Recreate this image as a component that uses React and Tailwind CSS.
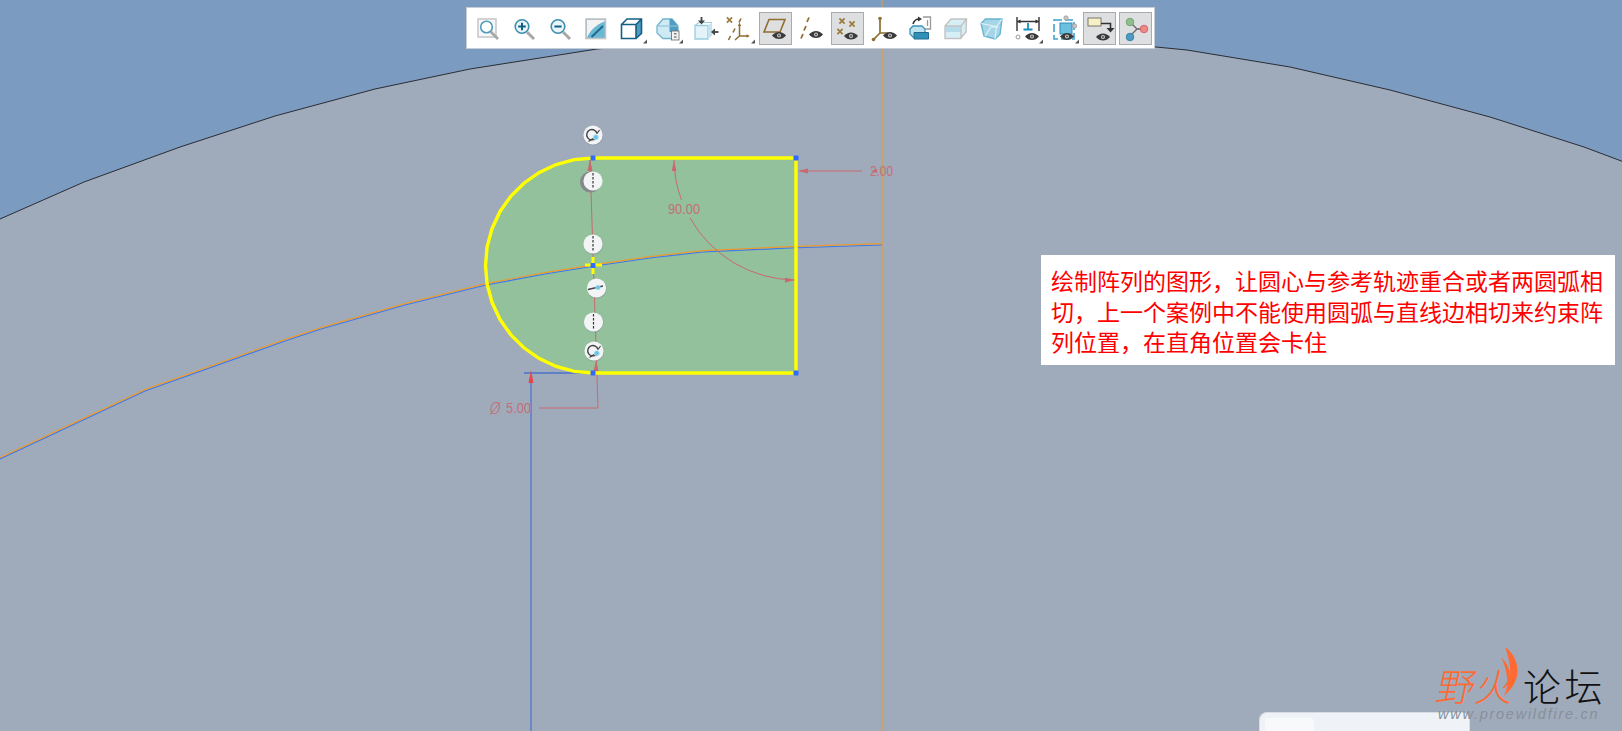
import React from "react";

const bigPts = [[-20, 228], [0, 219], [84, 182], [180, 147], [275, 116], [375, 89], [470, 69], [597, 49], [730, 37], [880, 32], [1030, 36], [1156, 47], [1187, 50], [1290, 67], [1390, 90], [1490, 117], [1584, 147], [1640, 168]];
const bigLine = bigPts.map((p) => p.join(",")).join(" ");
const bigPoly = bigLine + " 1640,760 -20,760";

function sketchArc() {
  const pts = [];
  const n = 18;
  for (let i = 0; i <= n; i++) {
    const a = -Math.PI / 2 - (Math.PI * i) / n;
    pts.push(`${(593 + 107.5 * Math.cos(a)).toFixed(1)},${(265.5 + 107.5 * Math.sin(a)).toFixed(1)}`);
  }
  return pts;
}
const arcPts = sketchArc();
const sketchOutline = `796,373 796,158 ${arcPts.join(" ")}`;

const traj = [[0, 458], [145, 390], [285, 340], [321, 328], [405, 304], [486, 284], [545, 273], [595, 265], [650, 257], [703, 251], [790, 247], [882, 244]];
const trajO = traj.map((p) => `${p[0]},${p[1] - 0.4}`).join(" ");
const trajB = traj.map((p) => `${p[0]},${p[1] + 1}`).join(" ");

const DIM = "#c9696d";

function Dashes({ x, y }) {
  return <line x1={x} y1={y - 8} x2={x} y2={y + 8} stroke="#333" strokeWidth="1.2" strokeDasharray="2.4 1.6" />;
}
function Disc({ x, y }) {
  return (
    <g>
      <circle cx={x + 0.3} cy={y + 0.8} r="9.8" fill="#8a8f96" opacity="0.55" />
      <circle cx={x} cy={y} r="9.6" fill="#f3f4f6" />
    </g>
  );
}
function TangentHandle({ x, y }) {
  return (
    <g>
      <Disc x={x} y={y} />
      <path d={`M${x + 2.5} ${y + 3.5}A5.2 5.2 0 1 1 ${x + 4} ${y - 1.5}`} fill="none" stroke="#444" strokeWidth="1.4" />
      <path d={`M${x - 4.5} ${y + 6.5}L${x} ${y + 3.5}M${x + 4} ${y - 1.5}L${x + 6.5} ${y - 5}`} stroke="#444" strokeWidth="1.2" fill="none" />
      <circle cx={x + 2.8} cy={y + 2.2} r="2.5" fill="#6cc6e6" stroke="#a9dff0" strokeWidth="0.6" />
    </g>
  );
}

function Eye({ x = 22, y = 24 }) {
  return (
    <g>
      <path d={`M${x - 7} ${y}C${x - 3.2} ${y - 4.8} ${x + 3.2} ${y - 4.8} ${x + 7} ${y}C${x + 3.2} ${y + 4.8} ${x - 3.2} ${y + 4.8} ${x - 7} ${y}Z`} fill="#3a3a3a" />
      <circle cx={x} cy={y} r="2" fill="#cfcfcf" />
      <circle cx={x} cy={y} r="0.9" fill="#3a3a3a" />
    </g>
  );
}
function Corner() {
  return <path d="M32 27.5v4h-4z" fill="#555" />;
}
function XMark({ x, y, s = 2.6, c = "#9c7a3c" }) {
  return <path d={`M${x - s} ${y - s}L${x + s} ${y + s}M${x + s} ${y - s}L${x - s} ${y + s}`} stroke={c} strokeWidth="1.7" />;
}
const BR = "#8f6e33";

const icons = [
  <g key="a">
    <rect x="7" y="7" width="18" height="18" fill="#f7f8f9" stroke="#c9c9c9" strokeWidth="1.6" />
    <circle cx="15.5" cy="15" r="5.8" fill="#fff" stroke="#4b9dbd" strokeWidth="1.6" />
    <path d="M19.5 19.5L27 27" stroke="#a8a8a8" strokeWidth="2.8" />
  </g>,
  <g key="b">
    <circle cx="15" cy="14.5" r="6.8" fill="#eaf5f9" stroke="#3d8fae" strokeWidth="1.6" />
    <path d="M11.2 14.5h7.6M15 10.7v7.6" stroke="#0f5f85" strokeWidth="2" />
    <path d="M20 20L27 27" stroke="#a8a8a8" strokeWidth="3" />
  </g>,
  <g key="c">
    <circle cx="15" cy="14.5" r="6.8" fill="#eaf5f9" stroke="#3d8fae" strokeWidth="1.6" />
    <path d="M11.4 14.5h7.2" stroke="#0f5f85" strokeWidth="2" />
    <path d="M20 20L27 27" stroke="#a8a8a8" strokeWidth="3" />
  </g>,
  <g key="d">
    <rect x="7" y="7" width="19.5" height="19.5" fill="#6bb8d4" stroke="#c4c4c4" strokeWidth="1.6" />
    <path d="M8 8h17.5v1.5C21 11 13 15 8 25.5z" fill="#f3f3f3" />
    <path d="M12.5 25L24 14" stroke="#1d6c90" strokeWidth="2" />
  </g>,
  <g key="e">
    <path d="M6.5 12.5h14.5v14H6.5z" fill="#fff" />
    <path d="M21 12.5L26.5 7v14.5L21 26.5z" fill="#4e9dbf" />
    <path d="M6.5 12.5h14.5v14H6.5zM6.5 12.5L12 7h14.5v14.5L21 26.5M21 12.5L26.5 7" fill="none" stroke="#155f84" strokeWidth="1.6" />
    <Corner />
  </g>,
  <g key="f">
    <path d="M6 14L12 7h9l6 7v7l-5 5.5H12L6 21z" fill="#cfeaf4" stroke="#72b5d0" strokeWidth="1.3" />
    <path d="M18.5 7h2.5l6 7v6h-8.5z" fill="#4f9dc0" />
    <path d="M6 14h21" stroke="#8cc4da" strokeWidth="1.1" />
    <rect x="20.5" y="19" width="7.5" height="9" fill="#f3f3f3" stroke="#666" strokeWidth="0.8" />
    <path d="M23 21.8h2.5M23 25h2.5" stroke="#444" strokeWidth="1" />
    <Corner />
  </g>,
  <g key="g">
    <path d="M8 13.5h13v13.5H8z" fill="#e3f3f9" stroke="#9ccde0" strokeWidth="1.3" />
    <path d="M21 13.5l4-3v13l-4 3.5z" fill="#c2e3ef" />
    <path d="M8 13.5l4-3h13" fill="none" stroke="#9ccde0" strokeWidth="1.1" />
    <path d="M14.5 5v6" stroke="#444" strokeWidth="1.8" />
    <path d="M11 8.5h7l-3.5 4z" fill="#444" />
    <path d="M31.5 20h-6" stroke="#444" strokeWidth="1.8" />
    <path d="M28 16.5v7l-4-3.5z" fill="#444" />
  </g>,
  <g key="h">
    <XMark x={6.5} y={8} />
    <path d="M16 10.5l2-4M5.5 28l2-4M10 20.5l2-4" stroke={BR} strokeWidth="1.6" />
    <path d="M16.5 24v-11M16.5 24h8M12 28l4.5-4" stroke={BR} strokeWidth="1.5" fill="none" />
    <path d="M14.8 14l1.7-3.4 1.7 3.4zM23.5 22.3l3.4 1.7-3.4 1.7z" fill={BR} />
    <Corner />
  </g>,
  <g key="i">
    <path d="M10 7.5h16l-5 12.5H5z" fill="#dedfdf" stroke={BR} strokeWidth="1.6" />
    <Eye x={20} y={23.5} />
  </g>,
  <g key="j">
    <path d="M14 5.5l-2 4.5M11 14l-2 4.5M8 22l-2 4.5" stroke={BR} strokeWidth="1.8" />
    <Eye x={21} y={22.5} />
  </g>,
  <g key="k">
    <XMark x={11} y={9} />
    <XMark x={21} y={12} />
    <XMark x={9} y={19.5} />
    <Eye x={20} y={24} />
  </g>,
  <g key="l">
    <path d="M13 21V7M13 21h8M13 21l-6.5 6.5" stroke={BR} strokeWidth="1.7" fill="none" />
    <circle cx="13" cy="6.5" r="1.8" fill={BR} />
    <circle cx="6.5" cy="27.5" r="1.8" fill={BR} />
    <Eye x={23} y={23.5} />
  </g>,
  <g key="m">
    <path d="M7 17l3-3h9l3 3v8H10l-3-3z" fill="#bfe3ef" stroke="#3f93b7" strokeWidth="1.3" />
    <path d="M11 20.5h14.5v6.5H11z" fill="#2f8fb7" stroke="#1d6c90" strokeWidth="1" />
    <path d="M10 12c1-3 3-5 6-5" stroke="#333" strokeWidth="1.6" fill="none" />
    <path d="M15 4.5l4 2.5-4 2.5z" fill="#333" />
    <path d="M20 5h7.5v12H22M24.5 8v6" stroke="#999" strokeWidth="1.3" fill="none" />
  </g>,
  <g key="n">
    <path d="M6 14L12 7h15.5l-.5 13-5.5 6.5H6z" fill="#d7eef6" stroke="#c2c2c2" strokeWidth="1.4" />
    <path d="M6.5 14.5H21.5v5.5H6.5z" fill="#b4dbe9" />
    <path d="M6 14h16l5.5-7M22 14v12.5" fill="none" stroke="#c2c2c2" strokeWidth="1.3" />
  </g>,
  <g key="o">
    <path d="M6 11.5L10.5 7H27l-2 15.5-5 4.5-11-3z" fill="#a5d6e8" stroke="#67b4d1" strokeWidth="1.4" />
    <path d="M6 11.5l15.5 3L27 7M21.5 14.5L20 27M10 24l6-9 7.5 0" fill="none" stroke="#e3f3f9" strokeWidth="1.1" />
  </g>,
  <g key="p">
    <path d="M6 5v14M28 5v14M6 9.5h22" stroke="#333" strokeWidth="1.4" fill="none" />
    <path d="M6 9.5l3.5-2v4zM28 9.5l-3.5-2v4z" fill="#333" />
    <path d="M17 11v6.5M12.5 17.5h9" stroke="#1d8ec0" strokeWidth="1.8" />
    <circle cx="7" cy="25" r="2" fill="#fff" stroke="#999" />
    <Eye x={21} y={24.5} />
    <Corner />
  </g>,
  <g key="q">
    <rect x="7" y="8" width="20" height="19" fill="#fff" stroke="#3fa3cd" strokeWidth="1.6" strokeDasharray="8 3" />
    <rect x="13" y="11" width="12" height="11" fill="#6bbfe0" stroke="#2f8fb7" />
    <circle cx="19" cy="6" r="2.2" fill="#c6c6c6" stroke="#888" strokeWidth="0.6" />
    <circle cx="27.5" cy="14" r="2.2" fill="#c6c6c6" stroke="#888" strokeWidth="0.6" />
    <Eye x={20} y={24.5} />
    <Corner />
  </g>,
  <g key="r">
    <rect x="5" y="6" width="13" height="8" fill="#f7efc6" stroke="#6d6d5d" strokeWidth="0.9" />
    <path d="M18 11.5h9.5v6" stroke="#333" strokeWidth="1.6" fill="none" />
    <path d="M23.5 16h8l-4 4.5z" fill="#333" />
    <Eye x={20} y={25} />
  </g>,
  <g key="s">
    <path d="M11 10l7 7-7 7M18 17h7" stroke="#666" strokeWidth="1.3" fill="none" />
    <circle cx="11" cy="10" r="3.8" fill="#8fbf8a" stroke="#6a9b6a" strokeWidth="0.8" />
    <circle cx="25" cy="17" r="3.8" fill="#ee8a83" stroke="#cc5566" strokeWidth="0.8" />
    <circle cx="11" cy="25" r="3.8" fill="#4d9ac2" stroke="#2f7aa2" strokeWidth="0.8" />
  </g>,
];
const active = new Set([8, 10, 17, 18]);

export default function App() {
  return (
    <div className="relative w-[1622px] h-[731px] overflow-hidden bg-[#7b9bc1] font-['Liberation_Sans',sans-serif]">
      <svg width="1622" height="731" viewBox="0 0 1622 731" className="block">
        <polygon points={bigPoly} fill="#9fabbb" stroke="#2a2d33" strokeWidth="1" />
        <line x1="882" y1="0" x2="882" y2="731" stroke="#eb9a2e" strokeWidth="1" />

        <polygon points={sketchOutline} fill="#92c19b" />
        <polyline points={trajB} fill="none" stroke="#3a78f0" strokeWidth="1.2" />
        <polyline points={trajO} fill="none" stroke="#eb9a2e" strokeWidth="1.2" />

        <line x1="531" y1="378" x2="531" y2="731" stroke="#4a72cc" strokeWidth="1.2" />
        <line x1="524" y1="373" x2="593" y2="373" stroke="#4a72cc" strokeWidth="1.4" />
        <path d="M531 370l-2.5 13h5z" fill="#e8444c" />

        <g stroke={DIM} strokeWidth="1" fill="none">
          <path d="M590 160L598 408H539" />
          <path d="M862 171H800" />
          <path d="M674 160A122 122 0 0 0 681.5 200" />
          <path d="M690 218A122 122 0 0 0 795 280" />
        </g>
        <g fill={DIM}>
          <path d="M590 159l-2.5 12h5z" />
          <path d="M596 361l-2.5 10h5z" />
          <path d="M798 171l10-2.5v5z" />
          <path d="M674 160l-2.2 11h4.6z" />
          <path d="M795 280l-10-2.3v4.8z" />
          <path d="M871 171l6-2v4z" />
        </g>
        <g fill={DIM} fontFamily="Liberation Sans" opacity="0.9">
          <text x="668" y="214" fontSize="14" textLength="32" lengthAdjust="spacingAndGlyphs">90.00</text>
          <text x="870" y="176" fontSize="14" textLength="23" lengthAdjust="spacingAndGlyphs">2.00</text>
          <text x="489.5" y="414" fontSize="17" fontStyle="italic" fontFamily="Roboto" fontWeight="300">Ø</text>
          <text x="506" y="413" fontSize="14" textLength="25" lengthAdjust="spacingAndGlyphs">5.00</text>
        </g>

        <polyline points={`${arcPts.join(" ")} 796,373 796,158 593,158`} fill="none" stroke="#ffff00" strokeWidth="3.4" />

        <path d="M593 257v17M585 265h17" stroke="#ffff00" strokeWidth="3" />
        <g fill="#2f6bff">
          <rect x="590.5" y="155.5" width="5" height="5" rx="1" />
          <rect x="793.5" y="155.5" width="5" height="5" rx="1" />
          <rect x="793.5" y="370.5" width="5" height="5" rx="1" />
          <rect x="590.5" y="370.5" width="5" height="5" rx="1" />
          <rect x="590.5" y="263" width="5" height="5" rx="1" />
        </g>

        <TangentHandle x={593} y={135} />
        <circle cx="590.5" cy="182" r="10.5" fill="#85878c" />
        <circle cx="593" cy="181" r="9.6" fill="#f3f4f6" />
        <Dashes x={593} y={181} />
        <Disc x={593} y={244} />
        <Dashes x={593} y={244} />
        <Disc x={596.5} y={288} />
        <line x1="588" y1="289.5" x2="603" y2="286" stroke="#444" strokeWidth="1.3" />
        <circle cx="598" cy="287.5" r="2.3" fill="#6cc6e6" stroke="#a9dff0" strokeWidth="0.6" />
        <Disc x={593.5} y={322} />
        <Dashes x={593.5} y={322} />
        <TangentHandle x={594} y={351} />
      </svg>

      <div className="absolute left-[466px] top-[7px] w-[689px] h-[42px] bg-white border border-[#c6cdd6] flex items-center gap-[3px] pl-[4px] box-border">
        {icons.map((ic, i) => (
          <div
            key={i}
            className={active.has(i) ? "w-[33px] h-[33px] shrink-0 flex items-center justify-center bg-[#dddfe1] border border-[#a9abae] box-border" : "w-[33px] h-[33px] shrink-0 flex items-center justify-center border border-transparent box-border"}
          >
            <svg width="33" height="33" viewBox="0 0 33 33" className="block shrink-0">{ic}</svg>
          </div>
        ))}
      </div>

      <div className="absolute left-[1041px] top-[255px] w-[574px] h-[110px] bg-white pl-[10px] pr-[4px] pt-[10px] text-[23px] leading-[30.5px] text-[#ff0000] font-['Noto_Sans_CJK_SC',sans-serif]">
        绘制阵列的图形，让圆心与参考轨迹重合或者两圆弧相切，上一个案例中不能使用圆弧与直线边相切来约束阵列位置，在直角位置会卡住
      </div>

      <div className="absolute left-[1259px] top-[712px] w-[211px] h-[19px] bg-[#eff2f6] rounded-t-[8px] border border-b-0 border-[#d9dde3] box-border pl-[5px] pt-[5px]">
        <div className="w-[49px] h-[14px] bg-[#f8f9fb] rounded-t-[4px]" />
      </div>

      <div className="absolute left-[1438px] top-[665px] h-[40px] flex items-center text-[38px] leading-[40px] font-light font-['Noto_Sans_CJK_SC',sans-serif]">
        <span className="text-[#ff6a33] -skew-x-12 inline-block w-[85px] tracking-[1px]">野火</span>
        <span className="text-[#111] inline-block tracking-[3.5px]">论坛</span>
      </div>
      <svg width="24" height="56" viewBox="1498 644 24 56" className="absolute left-[1498px] top-[644px]">
        <path d="M1505 647C1515 654 1519 666 1517 676C1515 685 1510 690 1504 696C1508 686 1511 676 1510 667C1509 659 1507 652 1505 647Z" fill="#ff6a33" />
        <path d="M1501 657C1506 662 1510 668 1510 676C1510 680 1509 684 1507 687C1508 678 1506 667 1501 657Z" fill="#ff6a33" />
      </svg>
      <div className="absolute left-[1438px] top-[706px] text-[14.5px] leading-[16px] italic tracking-[1.75px] text-[#878f9a] font-['Liberation_Sans',sans-serif]">
        www.proewildfire.cn
      </div>
    </div>
  );
}
